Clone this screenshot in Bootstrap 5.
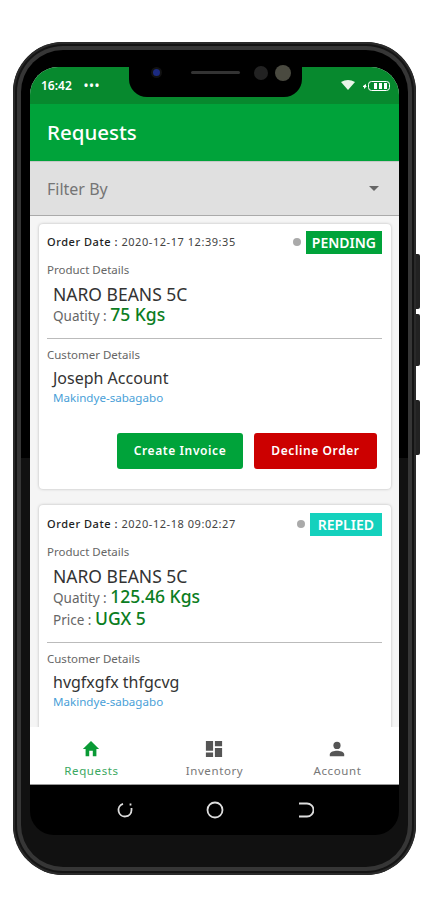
<!DOCTYPE html>
<html lang="en"><head><meta charset="utf-8"><title>Requests</title>
<link href="https://cdn.jsdelivr.net/npm/bootstrap@5.3.0/dist/css/bootstrap.min.css" rel="stylesheet">
<style>
body{background:#fff;font-family:"Noto Sans","Open Sans",sans-serif;width:429px;height:900px;overflow:hidden}
.phone{position:relative;width:403px;height:833px;margin:42px 0 0 13px;background:#141414;border-radius:50px;padding:4px;box-shadow:inset 0 0 0 2px #2a2a2a}
.phone-ring{height:100%;background:#363636;border-radius:46px;padding:4px}
.phone-face{height:100%;background:linear-gradient(#000 50%,#111 50%);border-radius:42px;padding:17px 9px 0 9px;position:relative;overflow:hidden}
.side-key{position:absolute;left:403px;width:4px;background:#222;border-radius:0 2px 2px 0}
.key-a{top:212px;height:55px}.key-b{top:272px;height:52px}.key-c{top:358px;height:55px}
.screen{width:369px;height:718px;border-radius:28px 28px 0 0;overflow:hidden;background:#f5f5f5}
.status-row{height:37px;background:#07892e;color:#fff;font-size:12px;font-weight:600;padding:12px 8px 0 11px;line-height:14px}
.dots{letter-spacing:1px;margin-left:12px;font-size:12px}
.notch{position:absolute;left:108px;top:17px;width:173px;height:30px;background:#000;border-radius:0 0 18px 18px}
.notch-dot{position:absolute;border-radius:50%}
.cam{left:22px;top:0;width:11px;height:11px;background:#1b2a80;border:2px solid #111}
.spk{position:absolute;left:62px;top:4px;width:49px;height:3px;border-radius:2px;background:#333}
.sen1{left:125px;top:-1px;width:14px;height:14px;background:#222}
.sen2{left:146px;top:-2px;width:16px;height:16px;background:#4a4a40}
.app-head{height:57px;background:#00a33a;color:#fff;font-size:20.5px;font-weight:500;padding-left:17px;line-height:57px}
.filter-row{height:55px;background:#e0e0e0;color:#757575;font-size:16px;padding:0 20px 0 17px;border-top:1px solid #c8c8c8;border-bottom:1px solid #aaa}
.caret-down{width:0;height:0;border-left:5px solid transparent;border-right:5px solid transparent;border-top:5px solid #666}
.list-area{height:511px;overflow:hidden;padding:8px 8px 0 9px}
.order{background:#fff;border-radius:4px;box-shadow:0 0 3px rgba(0,0,0,.25);padding:6px 9px 0 8px;margin-bottom:16px}
.o1{height:265px}.o2{height:240px;padding-top:7px}
.date-line{font-size:11px;letter-spacing:.55px;color:#444;line-height:24px}
.date-line b{font-weight:500;color:#222}
.stat-dot{width:8px;height:8px;border-radius:50%;background:#aaa;margin-right:5px}
.stat-tag{color:#fff;font-size:14px;font-weight:600;height:23px;line-height:23px;padding:0 6px}
.tag-g{background:#00a33a}.tag-t{background:#14d1bd;padding:0 8px}
.sec-label{font-size:11.500px;color:#666;line-height:14px;margin-top:9px}
.prod-name{font-size:17.500px;color:#333;line-height:22px;margin:6px 0 0 6px}
.cust-name{font-size:16px;color:#333;line-height:22px;margin:5px 0 0 6px}
.kv{font-size:13.500px;color:#666;line-height:22px;height:22px;margin-left:6px}
.kv span{font-size:17.500px;font-weight:500;color:#0b7d22;line-height:1}
.rule{height:1px;background:#bbb;margin:11px 0 3px}
.place{font-size:11.600px;color:#4a9fd8;line-height:18px;margin:0 0 0 6px}
.act{border:0;border-radius:3px;color:#fff;font-size:12px;font-weight:600;letter-spacing:.6px;height:36px;padding:0}
.act-g{background:#00a33a;width:126px}.act-r{background:#cc0000;width:123px}
.act-row{margin-top:26px;padding-right:5px;gap:11px}
.tabs{height:58px;background:#fff;border-bottom:1px solid #999}
.tab-i{width:33.33%;color:#777;font-size:11.500px;letter-spacing:.6px;line-height:14px;padding-top:13px}
.tab-i svg{margin-bottom:6px}
.tab-i.on{color:#3aa860}
.softkeys{height:50px;background:#000;border-radius:0 0 24px 24px;gap:72px}
</style></head><body>
<div class="phone">
<div class="side-key key-a"></div><div class="side-key key-b"></div><div class="side-key key-c"></div>
<div class="phone-ring"><div class="phone-face">
<div class="notch"><i class="notch-dot cam"></i><i class="spk"></i><i class="notch-dot sen1"></i><i class="notch-dot sen2"></i></div>
<div class="screen d-flex flex-column">
<div class="status-row d-flex justify-content-between"><div>16:42<span class="dots">•••</span></div>
<svg width="50" height="14" viewBox="0 0 50 14"><path d="M0 3Q7-1 14 3L7 11Z" fill="#e8f5e8"/><path d="M22 7l3-2v2h1l-3 3V8h-1z" fill="#fff"/><rect x="27.500" y="2.500" width="21" height="9" rx="3" fill="none" stroke="#fff"/><rect x="33" y="4" width="3" height="6" fill="#fff"/><rect x="38" y="4" width="3" height="6" fill="#fff"/><rect x="43" y="4" width="3" height="6" fill="#fff"/></svg></div>
<div class="app-head">Requests</div>
<div class="filter-row d-flex justify-content-between align-items-center"><span>Filter By</span><i class="caret-down"></i></div>
<div class="list-area">
<div class="order o1">
<div class="d-flex align-items-center"><div class="date-line flex-grow-1"><b>Order Date :</b> 2020-12-17 12:39:35</div><i class="stat-dot"></i><div class="stat-tag tag-g">PENDING</div></div>
<div class="sec-label">Product Details</div>
<div class="prod-name">NARO BEANS 5C</div>
<div class="kv">Quatity : <span>75 Kgs</span></div>
<div class="rule"></div>
<div class="sec-label">Customer Details</div>
<div class="cust-name">Joseph Account</div>
<div class="place">Makindye-sabagabo</div>
<div class="d-flex justify-content-end act-row"><button class="btn act act-g">Create Invoice</button><button class="btn act act-r">Decline Order</button></div>
</div>
<div class="order o2">
<div class="d-flex align-items-center"><div class="date-line flex-grow-1"><b>Order Date :</b> 2020-12-18 09:02:27</div><i class="stat-dot"></i><div class="stat-tag tag-t">REPLIED</div></div>
<div class="sec-label">Product Details</div>
<div class="prod-name">NARO BEANS 5C</div>
<div class="kv">Quatity : <span>125.46 Kgs</span></div>
<div class="kv">Price : <span>UGX 5</span></div>
<div class="rule"></div>
<div class="sec-label">Customer Details</div>
<div class="cust-name">hvgfxgfx thfgcvg</div>
<div class="place">Makindye-sabagabo</div>
</div>
</div>
<div class="tabs d-flex text-center">
<div class="tab-i on"><svg width="18" height="18" viewBox="0 0 20 20" class="d-block mx-auto"><path d="M10 1L1 10h3v8h4v-6h4v6h4v-8h3z" fill="#0a9a35"/></svg>Requests</div>
<div class="tab-i"><svg width="18" height="18" viewBox="0 0 20 20" class="d-block mx-auto"><path d="M1 1h8v11H1zM11 1h8v6h-8zM1 14h8v5H1zM11 9h8v10h-8z" fill="#555"/></svg>Inventory</div>
<div class="tab-i"><svg width="18" height="18" viewBox="0 0 20 20" class="d-block mx-auto"><circle cx="10" cy="6" r="4" fill="#555"/><path d="M2 18v-2c0-3 5-4 8-4s8 1 8 4v2z" fill="#555"/></svg>Account</div>
</div>
</div>
<div class="softkeys d-flex justify-content-center align-items-center">
<svg width="18" height="18" viewBox="0 0 18 18" fill="none" stroke="#ddd" stroke-width="1.800"><path d="M7 2.800A6.500 6.500 0 1 0 15.500 9V7"/><path d="M14.500 2.500v2"/></svg>
<svg width="18" height="18" viewBox="0 0 18 18" fill="none" stroke="#ddd" stroke-width="1.800"><circle cx="9" cy="9" r="7.500"/></svg>
<svg width="18" height="18" viewBox="0 0 18 18" fill="none" stroke="#ddd" stroke-width="1.800"><path d="M3 2.500h8a6 6 0 0 1 0 13H3"/></svg>
</div>
</div></div></div>
</body></html>
